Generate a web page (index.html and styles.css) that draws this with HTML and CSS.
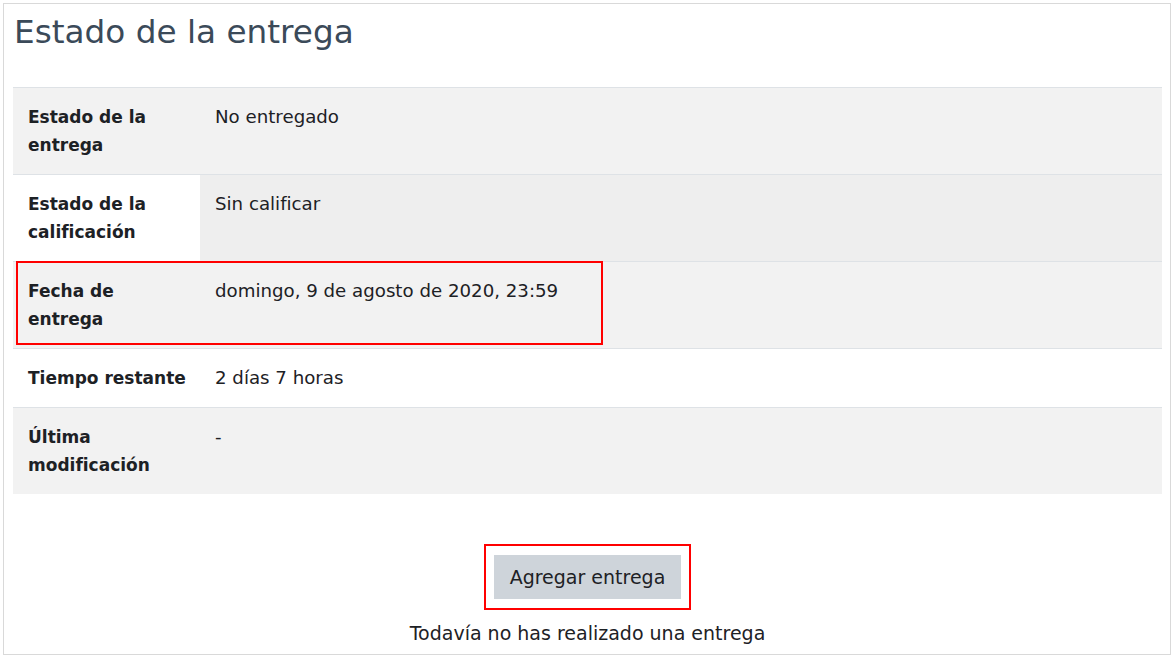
FILE: index.html
```html
<!DOCTYPE html>
<html lang="es">
<head>
<meta charset="utf-8">
<title>Estado de la entrega</title>
<link rel="stylesheet" href="styles.css">
</head>
<body>
<div class="page">
  <h2 class="title">Estado de la entrega</h2>
  <div class="table-wrap">
    <table class="status">
      <tbody>
        <tr class="odd">
          <th>Estado de la entrega</th>
          <td>No entregado</td>
        </tr>
        <tr class="even">
          <th>Estado de la calificación</th>
          <td class="notgraded">Sin calificar</td>
        </tr>
        <tr class="odd">
          <th>Fecha de entrega</th>
          <td>domingo, 9 de agosto de 2020, 23:59</td>
        </tr>
        <tr class="even">
          <th>Tiempo restante</th>
          <td>2 días 7 horas</td>
        </tr>
        <tr class="odd">
          <th>Última modificación</th>
          <td>-</td>
        </tr>
      </tbody>
    </table>
    <div class="mark mark-row"></div>
  </div>
  <div class="actions">
    <div class="btn-mark">
      <button class="btn" type="button">Agregar entrega</button>
    </div>
    <p class="hint">Todavía no has realizado una entrega</p>
  </div>
</div>
</body>
</html>
```

FILE: styles.css
```css
html, body {
  margin: 0;
  padding: 0;
  background: #ffffff;
}

body {
  font-family: "DejaVu Sans", "Liberation Sans", sans-serif;
  color: #1d2125;
}

.page {
  box-sizing: border-box;
  margin: 3px 0 0 3px;
  width: 1168px;
  height: 652px;
  border: 1px solid #d9d9d9;
  padding: 0 8px 0 9px;
}

.title {
  margin: 0;
  padding: 6px 0 0 1px;
  height: 83px;
  box-sizing: border-box;
  font-size: 32.7px;
  font-weight: 400;
  line-height: 44px;
  color: #3b4a59;
}

.table-wrap {
  position: relative;
}

.status {
  width: 100%;
  border-collapse: collapse;
  font-size: 18.2px;
  line-height: 28px;
}

.status th,
.status td {
  border-top: 1px solid #dee2e6;
  padding: 15px 15px;
  vertical-align: top;
  text-align: left;
}

.status th {
  width: 160px;
  padding-right: 12px;
  font-size: 17px;
  font-weight: 700;
}

.status td {
  font-weight: 400;
}

.status tr.odd th,
.status tr.odd td {
  background: #f2f2f2;
}

.status tr.even th,
.status tr.even td {
  background: #ffffff;
}

.status tr.even td.notgraded {
  background: #eeeeee;
}

.mark {
  position: absolute;
  border: 2px solid #ff0000;
  box-sizing: border-box;
}

.mark-row {
  left: 3px;
  top: 174px;
  width: 587px;
  height: 84px;
}

.actions {
  display: flex;
  flex-direction: column;
  align-items: center;
  padding-top: 50px;
}

.btn-mark {
  border: 2px solid #ff0000;
  padding: 9px 8px;
}

.btn {
  display: block;
  width: 187px;
  height: 44px;
  border: 0;
  border-radius: 0;
  background: #ced4da;
  color: #1d2125;
  font-family: inherit;
  font-size: 19px;
  padding: 0;
}

.hint {
  margin: 9px 0 0;
  font-size: 19px;
  line-height: 28px;
  color: #1d2125;
}
```
